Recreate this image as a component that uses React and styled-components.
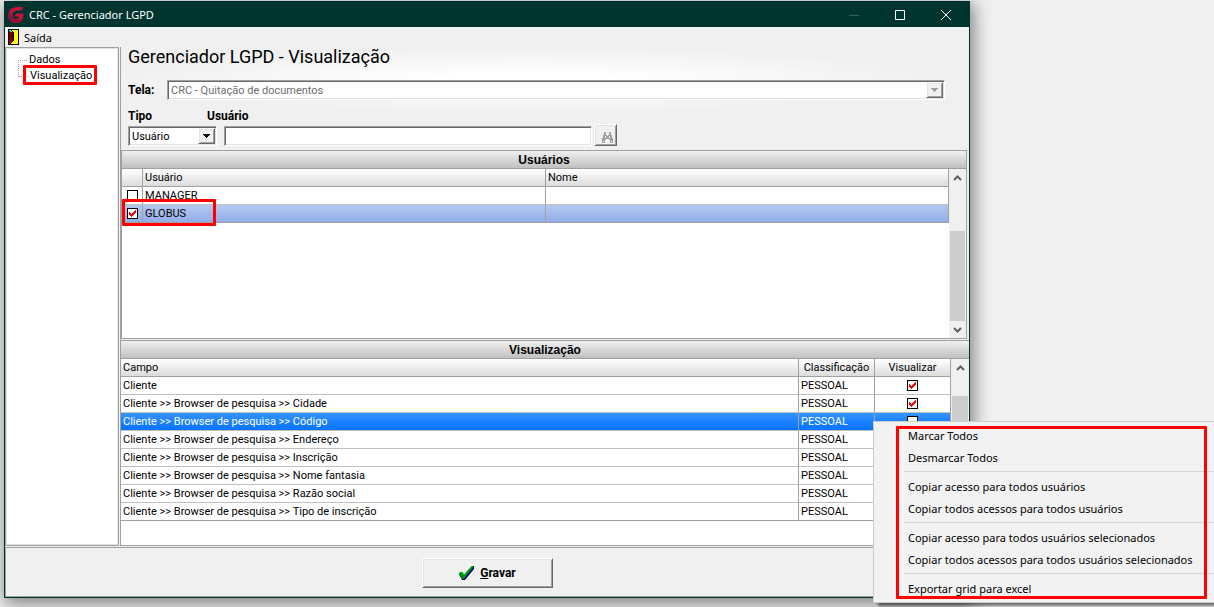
import React from 'react'
import styled, { createGlobalStyle } from 'styled-components'

const GlobalStyle = createGlobalStyle`
  * {
    box-sizing: border-box;
  }
  body {
    margin: 0;
    background: #f0f0f0;
    color: #000;
    font-family: Roboto, 'Liberation Sans', sans-serif;
    font-size: 11px;
    line-height: 17px;
  }
  button,
  input,
  select {
    font: inherit;
    color: inherit;
    border-radius: 0;
    margin: 0;
  }
`

const Desktop = styled.div`
  display: flex;
  min-height: 100vh;
  padding: 1px 244px 9px 4px;
  position: relative;
  overflow: hidden;
`

const Window = styled.div`
  flex: 1;
  min-width: 0;
  display: flex;
  flex-direction: column;
  background: #f0f0f0;
  border: 1px solid #00352f;
  box-shadow: 2px 4px 16px 2px rgba(0, 0, 0, 0.45);
`

const TitleBar = styled.header`
  display: flex;
  align-items: center;
  height: 25px;
  padding-left: 2px;
  gap: 4px;
  background: #00352f;
  color: #fff;
  font-family: 'Noto Sans', sans-serif;
  font-size: 11px;
`

const WindowButtons = styled.div`
  display: flex;
  margin-left: auto;
`

const WindowButton = styled.button`
  width: 46px;
  height: 25px;
  padding: 0;
  border: 0;
  background: none;
  color: ${({ disabled }) => (disabled ? '#3a605b' : '#fff')};
  display: grid;
  place-items: center;
`

const MenuBar = styled.nav`
  display: flex;
  height: 20px;
`

const MenuButton = styled.button`
  display: flex;
  align-items: center;
  gap: 5px;
  padding: 0 3px;
  border: 0;
  background: none;
  font-family: 'Noto Sans', sans-serif;
  font-size: 11px;
`

const Body = styled.div`
  flex: 1;
  display: flex;
  gap: 1px;
  min-height: 0;
  padding-bottom: 1px;
`

const Tree = styled.ul`
  width: 114px;
  margin: 0;
  padding: 3px 0 0 12px;
  list-style: none;
  background: #fff;
  border: 1px solid #a0a0a0;
  outline: 1px solid #e3e3e3;
  outline-offset: -2px;
`

const TreeItem = styled.li`
  display: flex;
  height: 16px;
  &::before {
    content: '';
    width: 9px;
    height: ${({ first }) => (first ? 9 : 16)}px;
    margin-top: ${({ first }) => (first ? 0 : -7)}px;
    border: dotted #a0a0a0;
    border-width: ${({ first }) => (first ? '0 0 1px' : '0 0 1px 1px')};
  }
`

const TreeLink = styled.a`
  position: relative;
  padding-left: 2px;
  color: #000;
  text-decoration: none;
`

const Highlight = styled.span`
  position: absolute;
  inset: ${({ inset }) => inset};
  border: 3px solid #f00;
  border-radius: 1px;
  pointer-events: none;
  z-index: 2;
`

const Main = styled.main`
  flex: 1;
  min-width: 0;
  display: flex;
  flex-direction: column;
  border-left: 1px solid #a0a0a0;
`

const Form = styled.form`
  height: 103px;
  padding: 0 24px 0 7px;
  background: radial-gradient(ellipse 420px 32px at 48% 33px, #fff 20%, #f0f0f0);
`

const Heading = styled.h1`
  margin: 0;
  font-size: 18px;
  font-weight: 400;
  line-height: 20px;
`

const FieldRow = styled.div`
  display: flex;
  align-items: center;
  height: 20px;
  margin-top: 13px;
`

const Label = styled.label`
  width: ${({ width }) => width}px;
  font-size: 12px;
  font-weight: 700;
  line-height: 14px;
`

const Labels = styled.div`
  display: flex;
  margin-top: 9px;
`

const Controls = styled.div`
  display: flex;
  align-items: flex-end;
  height: 22px;
  margin-top: 1px;
`

const sunken = `
  border: 1px solid;
  border-color: #a0a0a0 #fff #fff #a0a0a0;
  box-shadow: inset 1px 1px #696969, inset -1px -1px #e3e3e3;
  background: #fff;
`

const raised = `
  border: 1px solid;
  border-color: #fff #696969 #696969 #fff;
  box-shadow: inset 1px 1px #e3e3e3, inset -1px -1px #a0a0a0;
  background: #f0f0f0;
`

const SelectBox = styled.div`
  display: grid;
  grid-template-columns: 1fr 18px;
  height: 20px;
  ${({ width }) => (width ? `width: ${width}px;` : 'flex: 1;')}
  ${sunken}
`

const Select = styled.select`
  grid-area: 1 / 1 / 2 / 3;
  appearance: none;
  min-width: 0;
  padding: 1px 3px 0;
  border: 0;
  background: none;
  opacity: 1;
  &:disabled {
    color: #6d6d6d;
  }
`

const Arrow = styled.span`
  grid-area: 1 / 2;
  display: grid;
  place-items: center;
  margin: 1px 1px 1px 0;
  pointer-events: none;
  color: ${({ muted }) => (muted ? '#a0a0a0' : '#000')};
  ${raised}
`

const TextBox = styled.input`
  width: 368px;
  height: 20px;
  margin-left: 7px;
  padding: 0 3px;
  ${sunken}
`

const SearchButton = styled.button`
  display: grid;
  place-items: end;
  width: 23px;
  height: 22px;
  margin-left: 2px;
  padding: 0 2px 1px 0;
  ${raised}
`

const Panel = styled.section`
  display: flex;
  flex-direction: column;
  min-height: 0;
  height: ${({ height }) => height};
  flex: ${({ grow }) => (grow ? 1 : 'none')};
  margin: ${({ inner }) => (inner ? '0 2px 1px 0' : '0')};
  border: solid #a0a0a0;
  border-width: ${({ inner }) => (inner ? '1px' : '1px 0')};
  background: #fff;
`

const Band = styled.h2`
  margin: 0;
  height: 18px;
  border-bottom: 1px solid #a0a0a0;
  background: linear-gradient(#f0f0f0, #c0c0c0);
  font-family: 'Liberation Sans', sans-serif;
  font-size: 12px;
  line-height: 18px;
  text-align: center;
`

const Scroller = styled.div`
  flex: 1;
  display: flex;
  align-items: stretch;
  min-height: 0;
`

const Table = styled.table`
  flex: 1;
  width: 100%;
  align-self: flex-start;
  table-layout: fixed;
  border-collapse: separate;
  border-spacing: 0;
  border-right: 1px solid #a0a0a0;
  th,
  td {
    height: 18px;
    padding: 0 2px;
    white-space: nowrap;
    text-align: left;
    font-weight: 400;
    border: solid #c0c0c0;
    border-width: 0 0 1px;
  }
  th {
    background: linear-gradient(#fff, #dcdcdc);
    border-color: #a0a0a0;
  }
  th + th,
  td + td {
    border-left: 1px solid #a0a0a0;
  }
  tr:last-child td {
    border-bottom-color: #a0a0a0;
  }
  th.center,
  td.center {
    position: relative;
    text-align: center;
  }
`

const fills = {
  soft: 'linear-gradient(#b4c8f0, #8fabe8)',
  strong: 'linear-gradient(#3594ff, #0070ff)',
}

const Row = styled.tr`
  background: ${({ fill }) => fills[fill] || '#fff'};
  color: ${({ fill }) => (fill === 'strong' ? '#fff' : '#000')};
`

const Tick = styled.label`
  display: inline-grid;
  vertical-align: top;
  margin-top: 3px;
  width: 11px;
  height: 11px;
  input {
    grid-area: 1 / 1;
    appearance: none;
    width: 11px;
    height: 11px;
    border: 1px solid #000;
    background: #fff;
  }
  svg {
    grid-area: 1 / 1;
    pointer-events: none;
  }
`

const ScrollBar = styled.div`
  flex: none;
  display: flex;
  flex-direction: column;
  width: ${({ width }) => width}px;
  padding: 0 1px;
  background: #f0f0f0;
`

const ScrollArrow = styled.button`
  display: grid;
  place-items: center;
  height: 17px;
  padding: 0;
  border: 0;
  background: none;
  color: #606060;
`

const Thumb = styled.div`
  flex: 1;
  margin-top: ${({ top }) => top}px;
  background: #cdcdcd;
`

const Footer = styled.footer`
  display: flex;
  justify-content: center;
  height: 50px;
  padding-top: 10px;
  border: 1px solid #a0a0a0;
`

const SaveButton = styled.button`
  display: flex;
  align-items: center;
  justify-content: center;
  gap: 5px;
  width: 131px;
  height: 30px;
  font-size: 12px;
  font-weight: 700;
  ${raised}
`

const ContextMenu = styled.ul`
  position: absolute;
  left: 873px;
  top: 421px;
  width: 351px;
  margin: 0;
  padding: 2px 0 3px;
  list-style: none;
  background: #f2f2f2;
  border: 1px solid #ccc;
  box-shadow: 4px 4px 3px -1px rgba(0, 0, 0, 0.55);
  font-family: 'Noto Sans', sans-serif;
`

const MenuItem = styled.button`
  display: block;
  width: 100%;
  height: 22px;
  padding: 0 0 0 34px;
  border: 0;
  background: none;
  text-align: left;
  white-space: nowrap;
`

const Divider = styled.li`
  height: 1px;
  margin: 3px 0 3px 30px;
  background: #d7d7d7;
`

const Check = ({ label, checked }) => (
  <Tick>
    <input type="checkbox" aria-label={label} defaultChecked={checked} />
    {checked && (
      <svg width="11" height="11" viewBox="0 0 11 11" shapeRendering="crispEdges">
        <path
          fill="#f00"
          d="M2 4h1v1h1v1h1v-1h1v-1h1v-1h1v-1h1v3h-1v1h-1v1h-1v1h-1v1h-1v-1h-1v-1h-1z"
        />
      </svg>
    )}
  </Tick>
)

const Chevron = ({ down }) => (
  <svg width="9" height="6" viewBox="0 0 9 6">
    <path
      d={down ? 'M1 1l3.5 3.5L8 1' : 'M1 5l3.5-3.5L8 5'}
      fill="none"
      stroke="currentColor"
      strokeWidth="2"
    />
  </svg>
)

const Dropdown = ({ id, width, disabled, value }) => (
  <SelectBox width={width}>
    <Select id={id} disabled={disabled}>
      <option>{value}</option>
    </Select>
    <Arrow muted={disabled}>
      <svg width="7" height="4" shapeRendering="crispEdges">
        <path d="M0 0h7v1h-1v1h-1v1h-1v1h-1v-1h-1v-1h-1v-1h-1z" fill="currentColor" />
      </svg>
    </Arrow>
  </SelectBox>
)

const Logo = () => (
  <svg width="18" height="18" viewBox="0 0 18 18">
    <path
      d="M16.500 1.500C10 .5 5 1 2.500 4.500C0 8 1 13.500 4 15.800C7 18 13 17 15.500 14.500L16.500 7.500H9L7.500 10.500H12L11.500 12.500C9 13.800 6 13 5.500 10C5 6.500 7.500 4.500 11 4.500H14.500Z"
      fill="#c4143c"
    />
    <path d="M2.500 4.500C0 8 1 13.500 4 15.800C7 18 13 17 15.500 14.500L15.800 12.500C10 16 4 14 2.500 4.500Z" fill="#8c1238" />
  </svg>
)

const Door = () => (
  <svg width="11" height="16" viewBox="0 0 11 16" shapeRendering="crispEdges">
    <path d="M0 0h11v16h-11z" fill="#000" />
    <path d="M1 1h9v14h-9z" fill="#ff0" />
    <path d="M1 1h3v1h1v11h-1v1h-1v1h-2z" fill="#800000" />
    <path d="M1 1h2v1h-2zM2 2h2v1h-2z" fill="#0ff" />
    <path d="M5 3h1v9h-1zM4 6h1v2h-1z" fill="#000" />
  </svg>
)

const Binoculars = () => (
  <svg width="12" height="12" viewBox="0 0 12 12" shapeRendering="crispEdges">
    <path d="M3 1h2v3h3v-3h2v3h1v3h1v5h-4v-3h-3v3h-4v-5h1v-3h1z" fill="#fff" />
    <path
      d="M2 0h2v3h1v1h1v-1h1v-3h2v3h1v3h1v5h-3v-3h-1v-1h-3v1h-1v3h-3v-5h1v-3h1z"
      fill="#a0a0a0"
    />
    <path d="M3 4h1v2h-1zM7 4h1v2h-1zM1 9h1v1h-1zM9 9h1v1h-1z" fill="#fff" />
  </svg>
)

const GreenCheck = () => (
  <svg width="17" height="16" viewBox="0 0 17 16">
    <path d="M1 9l3-2 2 3L14 1h2v3L7 15H4z" fill="#000080" />
    <path d="M1 8l3-1 2 3L14 1h2L6 14H4z" fill="#009000" />
    <path d="M1 8l3-1 2 3L14 1" fill="none" stroke="#00d020" />
  </svg>
)

const fields = [
  ['Cliente', true],
  ['Cliente >> Browser de pesquisa >> Cidade', true],
  ['Cliente >> Browser de pesquisa >> Código', false],
  ['Cliente >> Browser de pesquisa >> Endereço', false],
  ['Cliente >> Browser de pesquisa >> Inscrição', false],
  ['Cliente >> Browser de pesquisa >> Nome fantasia', false],
  ['Cliente >> Browser de pesquisa >> Razão social', false],
  ['Cliente >> Browser de pesquisa >> Tipo de inscrição', false],
]

const menuGroups = [
  ['Marcar Todos', 'Desmarcar Todos'],
  ['Copiar acesso para todos usuários', 'Copiar todos acessos para todos usuários'],
  [
    'Copiar acesso para todos usuários selecionados',
    'Copiar todos acessos para todos usuários selecionados',
  ],
  ['Exportar grid para excel'],
]

const Users = () => (
  <Panel inner height="189px">
    <Band>Usuários</Band>
    <Scroller>
      <Table>
        <colgroup>
          <col style={{ width: 20 }} />
          <col />
          <col />
        </colgroup>
        <thead>
          <tr>
            <th aria-label="Selecionar" />
            <th>Usuário</th>
            <th>Nome</th>
          </tr>
        </thead>
        <tbody>
          <Row>
            <td className="center">
              <Check label="MANAGER" />
            </td>
            <td>MANAGER</td>
            <td />
          </Row>
          <Row fill="soft">
            <td className="center">
              <Check label="GLOBUS" checked />
              <Highlight inset="-6px -74px -4px 0" />
            </td>
            <td>GLOBUS</td>
            <td />
          </Row>
        </tbody>
      </Table>
      <ScrollBar width={17}>
        <ScrollArrow aria-label="Subir">
          <Chevron />
        </ScrollArrow>
        <Thumb top={45} />
        <ScrollArrow aria-label="Descer">
          <Chevron down />
        </ScrollArrow>
      </ScrollBar>
    </Scroller>
  </Panel>
)

const Fields = () => (
  <Panel grow>
    <Band>Visualização</Band>
    <Scroller>
      <Table>
        <colgroup>
          <col />
          <col style={{ width: 76 }} />
          <col style={{ width: 76 }} />
        </colgroup>
        <thead>
          <tr>
            <th>Campo</th>
            <th className="center">Classificação</th>
            <th className="center">Visualizar</th>
          </tr>
        </thead>
        <tbody>
          {fields.map(([name, checked], i) => (
            <Row key={name} fill={i === 2 ? 'strong' : undefined}>
              <td>{name}</td>
              <td>PESSOAL</td>
              <td className="center">
                <Check label={name} checked={checked} />
              </td>
            </Row>
          ))}
        </tbody>
      </Table>
      <ScrollBar width={18}>
        <ScrollArrow aria-label="Subir">
          <Chevron />
        </ScrollArrow>
        <Thumb top={20} />
        <ScrollArrow aria-label="Descer">
          <Chevron down />
        </ScrollArrow>
      </ScrollBar>
    </Scroller>
  </Panel>
)

const App = () => (
  <Desktop>
    <GlobalStyle />
    <Window>
      <TitleBar>
        <Logo />
        <span>CRC - Gerenciador LGPD</span>
        <WindowButtons>
          <WindowButton aria-label="Minimizar" disabled>
            <svg width="10" height="10">
              <path d="M0 5.500h10" stroke="currentColor" />
            </svg>
          </WindowButton>
          <WindowButton aria-label="Maximizar">
            <svg width="10" height="10">
              <path d="M.5.5h9v9h-9z" fill="none" stroke="currentColor" />
            </svg>
          </WindowButton>
          <WindowButton aria-label="Fechar">
            <svg width="10" height="10">
              <path d="M0 0l10 10M10 0L0 10" stroke="currentColor" />
            </svg>
          </WindowButton>
        </WindowButtons>
      </TitleBar>
      <MenuBar>
        <MenuButton>
          <Door />
          Saída
        </MenuButton>
      </MenuBar>
      <Body>
        <Tree>
          <TreeItem first>
            <TreeLink href="#dados">Dados</TreeLink>
          </TreeItem>
          <TreeItem>
            <TreeLink href="#visualizacao">
              Visualização
              <Highlight inset="-2px -5px -2px -5px" />
            </TreeLink>
          </TreeItem>
        </Tree>
        <Main>
          <Form>
            <Heading>Gerenciador LGPD - Visualização</Heading>
            <FieldRow>
              <Label htmlFor="tela" width={39}>
                Tela:
              </Label>
              <Dropdown id="tela" disabled value="CRC - Quitação de documentos" />
            </FieldRow>
            <Labels>
              <Label htmlFor="tipo" width={79}>
                Tipo
              </Label>
              <Label htmlFor="usuario">Usuário</Label>
            </Labels>
            <Controls>
              <Dropdown id="tipo" width={89} value="Usuário" />
              <TextBox id="usuario" />
              <SearchButton type="button" aria-label="Pesquisar" disabled>
                <Binoculars />
              </SearchButton>
            </Controls>
          </Form>
          <Users />
          <Fields />
        </Main>
      </Body>
      <Footer>
        <SaveButton>
          <GreenCheck />
          <span>
            <u>G</u>ravar
          </span>
        </SaveButton>
      </Footer>
    </Window>
    <ContextMenu>
      <Highlight inset="4px 16px 3px 22px" />
      {menuGroups.map((items, i) => (
        <React.Fragment key={items[0]}>
          {i > 0 && <Divider />}
          {items.map(item => (
            <li key={item}>
              <MenuItem>{item}</MenuItem>
            </li>
          ))}
        </React.Fragment>
      ))}
    </ContextMenu>
  </Desktop>
)

export default App
